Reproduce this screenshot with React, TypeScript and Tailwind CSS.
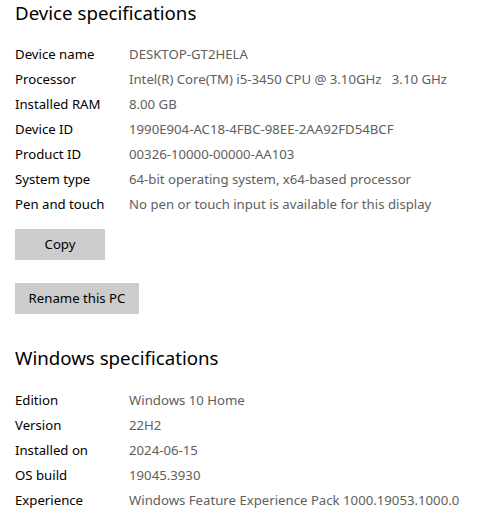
import React from "react";

const device: [string, string][] = [
  ["Device name", "DESKTOP-GT2HELA"],
  ["Processor", "Intel(R) Core(TM) i5-3450 CPU @ 3.10GHz   3.10 GHz"],
  ["Installed RAM", "8.00 GB"],
  ["Device ID", "1990E904-AC18-4FBC-98EE-2AA92FD54BCF"],
  ["Product ID", "00326-10000-00000-AA103"],
  ["System type", "64-bit operating system, x64-based processor"],
  ["Pen and touch", "No pen or touch input is available for this display"],
];

const windows: [string, string][] = [
  ["Edition", "Windows 10 Home"],
  ["Version", "22H2"],
  ["Installed on", "2024-06-15"],
  ["OS build", "19045.3930"],
  ["Experience", "Windows Feature Experience Pack 1000.19053.1000.0"],
];

function Rows({ rows }: { rows: [string, string][] }) {
  return (
    <div className="flex flex-col">
      {rows.map(([k, v]) => (
        <div key={k} className="flex h-[25px] items-center leading-[25px]">
          <div className="w-[114px] shrink-0 text-[#000000]">{k}</div>
          <div className="whitespace-pre text-[#606060]">{v}</div>
        </div>
      ))}
    </div>
  );
}

export default function App() {
  return (
    <div
      className="w-[480px] h-[514px] overflow-hidden bg-white pl-[15px] text-[13.2px]"
      style={{ fontFamily: '"Noto Sans", "Open Sans", sans-serif' }}
    >
      <h2 className="text-[18.7px] leading-[25px] text-black">Device specifications</h2>
      <div className="mt-[17px]">
        <Rows rows={device} />
      </div>
      <div className="mt-[12px] flex flex-col items-start gap-[23px]">
        <div className="flex h-[31px] w-[90px] items-center justify-center bg-[#cccccc] text-black">Copy</div>
        <div className="flex h-[31px] w-[124px] items-center justify-center bg-[#cccccc] text-black">Rename this PC</div>
      </div>
      <h2 className="mt-[31px] text-[18.7px] leading-[26px] text-black">Windows specifications</h2>
      <div className="mt-[17px]">
        <Rows rows={windows} />
      </div>
    </div>
  );
}
